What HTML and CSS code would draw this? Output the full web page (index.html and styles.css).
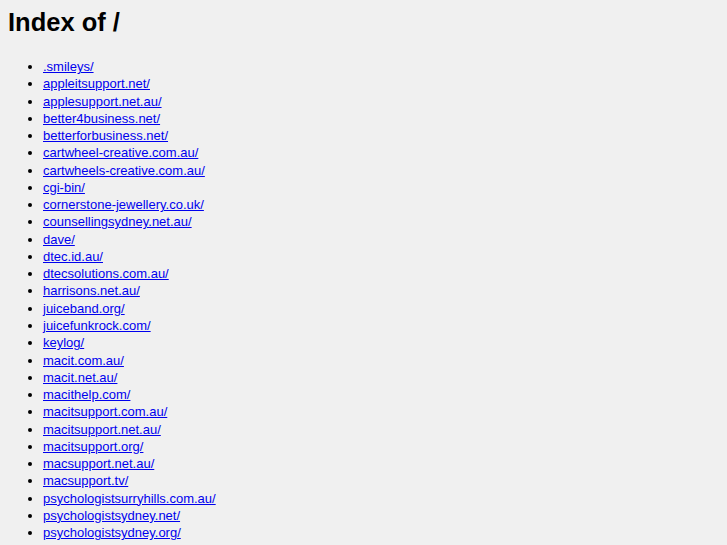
FILE: index.html
```html
<!DOCTYPE html>
<html>
<head>
<meta charset="utf-8">
<title>Index of /</title>
<link rel="stylesheet" href="styles.css">
</head>
<body>
<h1 class="title">Index of /</h1>
<ul class="listing">
<li><a href="#">.smileys/</a></li>
<li><a href="#">appleitsupport.net/</a></li>
<li><a href="#">applesupport.net.au/</a></li>
<li><a href="#">better4business.net/</a></li>
<li><a href="#">betterforbusiness.net/</a></li>
<li><a href="#">cartwheel-creative.com.au/</a></li>
<li><a href="#">cartwheels-creative.com.au/</a></li>
<li><a href="#">cgi-bin/</a></li>
<li><a href="#">cornerstone-jewellery.co.uk/</a></li>
<li><a href="#">counsellingsydney.net.au/</a></li>
<li><a href="#">dave/</a></li>
<li><a href="#">dtec.id.au/</a></li>
<li><a href="#">dtecsolutions.com.au/</a></li>
<li><a href="#">harrisons.net.au/</a></li>
<li><a href="#">juiceband.org/</a></li>
<li><a href="#">juicefunkrock.com/</a></li>
<li><a href="#">keylog/</a></li>
<li><a href="#">macit.com.au/</a></li>
<li><a href="#">macit.net.au/</a></li>
<li><a href="#">macithelp.com/</a></li>
<li><a href="#">macitsupport.com.au/</a></li>
<li><a href="#">macitsupport.net.au/</a></li>
<li><a href="#">macitsupport.org/</a></li>
<li><a href="#">macsupport.net.au/</a></li>
<li><a href="#">macsupport.tv/</a></li>
<li><a href="#">psychologistsurryhills.com.au/</a></li>
<li><a href="#">psychologistsydney.net/</a></li>
<li><a href="#">psychologistsydney.org/</a></li>
</ul>
</body>
</html>
```

FILE: styles.css
```css
html {
  background: #f0f0f0;
}
body {
  margin: 8px;
  font-family: "Liberation Sans", Arial, sans-serif;
  font-size: 13px;
  color: #000;
}
.title {
  font-size: 25.5px;
  font-weight: bold;
  margin: 0;
  line-height: 28px;
}
.listing {
  margin: 22px 0 0 0;
  padding-left: 35px;
  line-height: 17.26px;
}
.listing a {
  color: #0000ee;
}
```
